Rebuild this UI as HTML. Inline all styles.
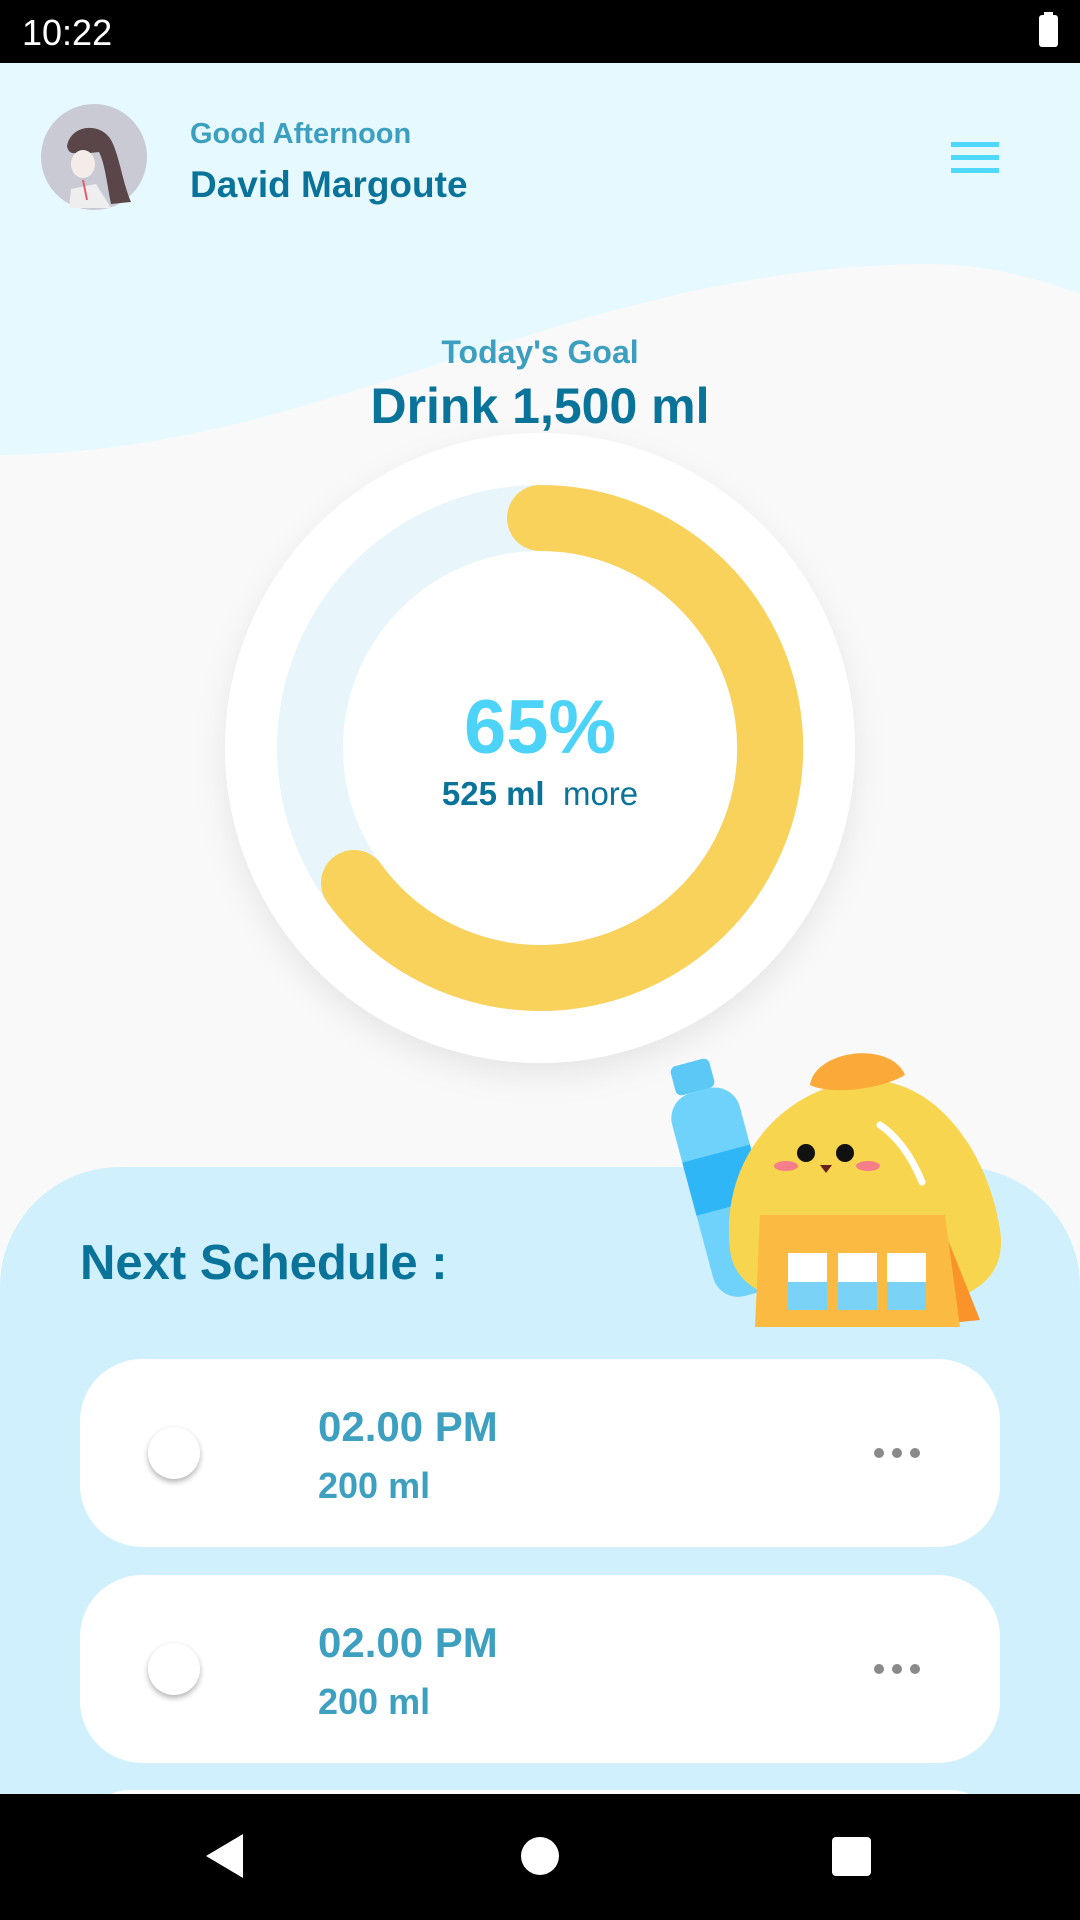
<!DOCTYPE html>
<html style="width:1080px;height:1920px;overflow:hidden"><head><meta charset="utf-8"><style>
*{margin:0;padding:0;box-sizing:border-box}
body{width:1080px;height:1920px;overflow:hidden;position:relative;background:#f9f9f9;font-family:"Liberation Sans",Roboto,sans-serif}
#wrap{position:absolute;left:0;top:0;width:1080px;height:1920px;overflow:hidden}
.abs{position:absolute}
.t{position:absolute;white-space:nowrap;font-weight:bold}
.card{position:absolute;left:80px;width:920px;height:188px;background:#fff;border-radius:62px}
.tog{position:absolute;left:68px;top:68px;width:52px;height:52px;border-radius:50%;background:#fff;box-shadow:0 3px 6px rgba(0,0,0,.3)}
.time{position:absolute;left:238px;top:44px;font-size:42px;color:#3ea0c0;font-weight:bold}
.ml{position:absolute;left:238px;top:106px;font-size:36px;color:#3ea0c0;font-weight:bold}
.dots{position:absolute;left:794px;top:89px;width:46px;height:10px}
.dots i{position:absolute;top:0;width:10px;height:10px;border-radius:50%;background:#8a8a8a}
</style></head><body><div id="wrap">
<svg class="abs" style="left:0;top:0" width="1080" height="1920">
<rect x="0" y="0" width="1080" height="1920" fill="#e6f9fe"/>
<path d="M0 455 C 330 452, 560 270, 920 264 C 990 263, 1040 280, 1080 294 L1080 1920 L0 1920 Z" fill="#f9f9f9"/>
<defs><filter id="sh" x="-20%" y="-20%" width="140%" height="140%"><feDropShadow dx="0" dy="12" stdDeviation="16" flood-color="#000" flood-opacity="0.08"/></filter></defs>
<circle cx="540" cy="748" r="315" fill="#fff" filter="url(#sh)"/>
<circle cx="540" cy="748" r="230" fill="none" stroke="#e8f6fc" stroke-width="66"/>
<path d="M540 518 A230 230 0 1 1 354 883" fill="none" stroke="#f9d25b" stroke-width="66" stroke-linecap="round"/>
<path d="M0 1287 A120 120 0 0 1 120 1167 L960 1167 A120 120 0 0 1 1080 1287 L1080 1920 L0 1920 Z" fill="#cff0fc"/>
</svg>
<div class="abs" style="left:0;top:0;width:1080px;height:63px;background:#000"></div>
<div class="abs" style="left:22px;top:12px;font-size:36px;color:#fff">10:22</div>
<div class="abs" style="left:1039px;top:15px;width:19px;height:32px;background:#fff;border-radius:3px"></div>
<div class="abs" style="left:1044px;top:12px;width:9px;height:5px;background:#fff"></div>
<svg class="abs" style="left:41px;top:104px" width="106" height="106">
<circle cx="53" cy="53" r="53" fill="#c9cad4"/>
<path d="M26 42 C30 20 60 18 70 36 C78 50 82 80 90 98 L70 100 C66 80 64 60 58 48 L40 50 C34 48 28 52 26 42 Z" fill="#5a4648"/>
<ellipse cx="42" cy="60" rx="12" ry="14" fill="#f4ece8"/>
<path d="M30 85 L55 80 L70 104 L28 104 Z" fill="#eee"/>
<path d="M42 76 L46 96" stroke="#e06070" stroke-width="2"/>
</svg>
<div class="t" style="left:190px;top:118px;font-size:29px;color:#3d9fc0">Good Afternoon</div>
<div class="t" style="left:190px;top:164px;font-size:37px;color:#0a7399">David Margoute</div>
<div class="abs" style="left:951px;top:142px;width:48px;height:5px;background:#4fd8fb"></div>
<div class="abs" style="left:951px;top:155px;width:48px;height:5px;background:#4fd8fb"></div>
<div class="abs" style="left:951px;top:168px;width:48px;height:5px;background:#4fd8fb"></div>
<div class="t" style="left:0;width:1080px;text-align:center;top:334px;font-size:32px;color:#3d9fc0">Today's Goal</div>
<div class="t" style="left:0;width:1080px;text-align:center;top:377px;font-size:50px;color:#0a7399">Drink 1,500 ml</div>
<div class="t" style="left:0;width:1080px;text-align:center;top:684px;font-size:76px;color:#4dd3f7">65%</div>
<div class="t" style="left:0;width:1080px;text-align:center;top:775px;font-size:33px;color:#0a7399">525 ml <span style="font-weight:normal">&nbsp;more</span></div>
<svg class="abs" style="left:640px;top:1030px" width="440" height="320">
<g transform="rotate(-15 70 120)">
<rect x="40" y="60" width="70" height="210" rx="26" fill="#6fd2fb"/>
<rect x="52" y="30" width="40" height="30" rx="6" fill="#5cc8f5"/>
<rect x="40" y="125" width="70" height="55" fill="#2fb6f6"/>
</g>
<path d="M90 220 C80 130 140 60 220 50 C300 45 350 130 360 200 C368 250 330 280 230 280 C150 280 95 265 90 220 Z" fill="#f7d54e"/>
<path d="M170 55 C175 20 250 10 265 45 C240 60 190 65 170 55 Z" fill="#fbaa3a"/>
<path d="M240 95 C262 110 275 135 282 152" stroke="#fff" stroke-width="7" fill="none" stroke-linecap="round"/>
<circle cx="166" cy="123" r="9" fill="#111"/><circle cx="205" cy="123" r="9" fill="#111"/>
<ellipse cx="146" cy="136" rx="12" ry="5" fill="#f57e8a"/><ellipse cx="228" cy="136" rx="12" ry="5" fill="#f57e8a"/>
<path d="M180 135 L192 135 L186 143 Z" fill="#6a2020"/>
<path d="M300 190 L340 290 L290 295 Z" fill="#f9932a"/>
<path d="M120 185 L305 185 L320 297 L115 297 Z" fill="#fbbb42"/>
<rect x="148" y="223" width="39" height="57" fill="#fff"/><rect x="198" y="223" width="39" height="57" fill="#fff"/><rect x="247" y="223" width="39" height="57" fill="#fff"/>
<rect x="148" y="252" width="39" height="28" fill="#7ad3f7"/><rect x="198" y="252" width="39" height="28" fill="#7ad3f7"/><rect x="247" y="252" width="39" height="28" fill="#7ad3f7"/>
</svg>
<div class="t" style="left:80px;top:1235px;font-size:49px;color:#0a7399">Next Schedule :</div>
<div class="card" style="top:1359px"><div class="tog"></div><div class="time">02.00 PM</div><div class="ml">200 ml</div><div class="dots"><i style="left:0"></i><i style="left:18px"></i><i style="left:36px"></i></div></div>
<div class="card" style="top:1575px"><div class="tog"></div><div class="time">02.00 PM</div><div class="ml">200 ml</div><div class="dots"><i style="left:0"></i><i style="left:18px"></i><i style="left:36px"></i></div></div>
<div class="card" style="top:1790px;height:100px"></div>
<div class="abs" style="left:0;top:1794px;width:1080px;height:126px;background:#000"></div>
<svg class="abs" style="left:0;top:1794px" width="1080" height="126">
<path d="M206 62 L243 40 L243 84 Z" fill="#fff"/>
<circle cx="540" cy="62" r="19" fill="#fff"/>
<rect x="832" y="43" width="39" height="39" rx="4" fill="#fff"/>
</svg>
</div></body></html>
